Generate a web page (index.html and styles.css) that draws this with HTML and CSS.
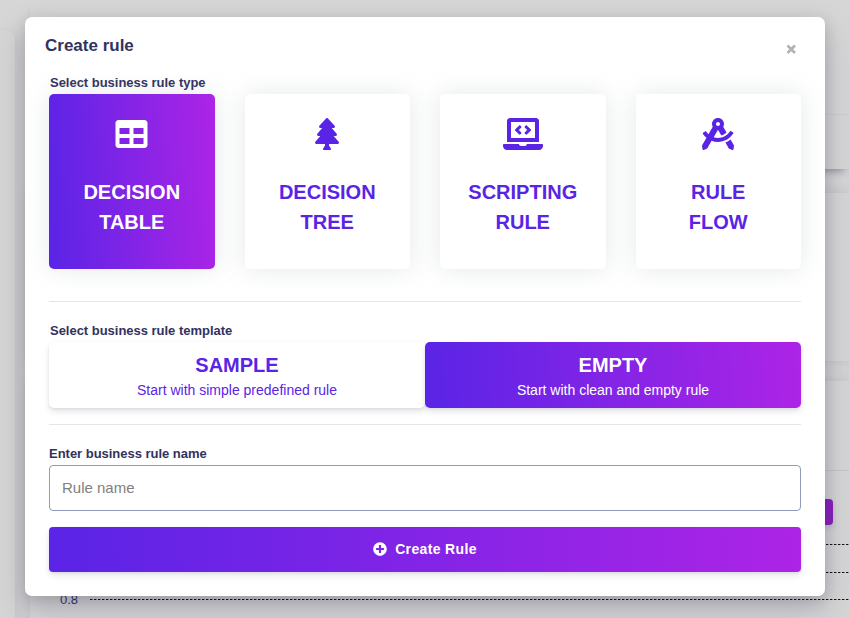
FILE: index.html
```html
<!DOCTYPE html>
<html lang="en">
<head>
<meta charset="utf-8">
<title>Create rule</title>
<link rel="stylesheet" href="styles.css">
</head>
<body>
<div class="page">
  <div class="sidebar"></div>
  <div class="content">
    <div class="panel panel-top"><div class="panel-head"></div></div>
    <div class="panel panel-mid"></div>
    <div class="panel panel-chart">
      <div class="chart-head"></div>
      <div class="chart-tools"><div class="tool-button"></div></div>
      <div class="tick"><span></span><i></i></div>
      <div class="tick"><span></span><i></i></div>
      <div class="tick"><span>0.8</span><i></i></div>
    </div>
  </div>
</div>
<div class="modal">
  <header class="modal-head">
    <h1>Create rule</h1>
    <button class="close" aria-label="Close"><svg viewBox="0 0 11 11"><path d="M1.500 1.500l7.500 7.500M9 1.500L1.500 9"/></svg></button>
  </header>
  <div class="label label-type">Select business rule type</div>
  <div class="types">
    <div class="type active">
      <svg class="icon icon-table" viewBox="0 0 512 512"><path d="M464 32H48C21.49 32 0 53.49 0 80v352c0 26.51 21.49 48 48 48h416c26.51 0 48-21.49 48-48V80c0-26.51-21.49-48-48-48zM224 416H64v-96h160v96zm0-160H64v-96h160v96zm224 160H288v-96h160v96zm0-160H288v-96h160v96z"/></svg>
      <div>DECISION<br>TABLE</div>
    </div>
    <div class="type">
      <svg class="icon" viewBox="0 0 384 512"><path d="M378.31 378.49L298.42 288h30.63c9.01 0 16.98-5 20.78-13.06 3.8-8.04 2.55-17.26-3.28-24.05L268.42 160h28.89c9.1 0 17.3-5.35 20.86-13.61 3.52-8.13 1.86-17.59-4.24-24.08L203.66 4.83c-6.03-6.45-17.28-6.45-23.32 0L70.06 122.31c-6.1 6.49-7.75 15.95-4.24 24.08C69.38 154.65 77.59 160 86.69 160h28.89l-78.14 90.91c-5.81 6.78-7.06 15.99-3.27 24.04C37.97 283 45.93 288 54.95 288h30.63L5.69 378.49c-6 6.79-7.36 16.09-3.56 24.26 3.75 8.05 12 13.25 21.01 13.25H160v24.45l-30.29 48.4c-5.32 10.64 2.42 23.16 14.31 23.16h95.96c11.89 0 19.63-12.52 14.31-23.16L224 440.45V416h136.86c9.01 0 17.26-5.2 21.01-13.25 3.8-8.17 2.44-17.47-3.56-24.26z"/></svg>
      <div>DECISION<br>TREE</div>
    </div>
    <div class="type">
      <svg class="icon" viewBox="0 0 640 512"><path d="M255.03 261.65c6.25 6.25 16.38 6.25 22.63 0l11.31-11.31c6.25-6.25 6.25-16.38 0-22.63L253.25 192l35.71-35.72c6.25-6.25 6.25-16.38 0-22.63l-11.31-11.31c-6.25-6.25-16.38-6.25-22.63 0l-58.34 58.34c-6.25 6.25-6.25 16.38 0 22.63l58.35 58.34zm96.01-11.3l11.31 11.31c6.25 6.25 16.38 6.25 22.63 0l58.34-58.34c6.25-6.25 6.25-16.38 0-22.63l-58.34-58.34c-6.25-6.25-16.38-6.25-22.63 0l-11.31 11.31c-6.25 6.25-6.25 16.38 0 22.63L386.75 192l-35.71 35.72c-6.25 6.25-6.25 16.38 0 22.63zM624 416H381.54c-.74 19.81-14.71 32-32.74 32H288c-18.69 0-33.02-17.47-32.77-32H16c-8.8 0-16 7.2-16 16v16c0 35.2 28.8 64 64 64h512c35.2 0 64-28.8 64-64v-16c0-8.8-7.2-16-16-16zM576 48c0-26.4-21.6-48-48-48H112C85.6 0 64 21.6 64 48v336h512V48zm-64 272H128V64h384v256z"/></svg>
      <div>SCRIPTING<br>RULE</div>
    </div>
    <div class="type">
      <svg class="icon" viewBox="0 0 512 512"><path d="M457.01 344.42c-25.05 20.33-52.63 37.18-82.54 49.05l54.38 94.19 53.95 23.04c9.81 4.19 20.89-2.21 22.17-12.8l7.02-58.25-54.98-95.23zm42.49-94.56c4.86-7.67 1.89-17.99-6.05-22.39l-28.07-15.57c-7.48-4.15-16.61-1.46-21.26 5.72C403.01 281.15 332.25 320 256 320c-23.93 0-47.23-4.25-69.41-11.53l67.36-116.68c.7.02 1.34.21 2.04.21s1.35-.19 2.04-.21l51.09 88.5c31.23-8.96 59.56-25.75 82.61-48.92l-51.79-89.71C347.39 128.03 352 112.63 352 96c0-53.02-42.98-96-96-96s-96 42.98-96 96c0 16.63 4.61 32.03 12.05 45.66l-68.3 118.31c-12.55-11.61-23.96-24.59-33.68-39-4.79-7.1-13.97-9.62-21.38-5.33l-27.75 16.07c-7.85 4.54-10.63 14.9-5.64 22.47 15.57 23.64 34.69 44.21 55.98 62.02L0 439.66l7.02 58.25c1.28 10.59 12.36 16.99 22.17 12.8l53.95-23.04 70.8-122.63C186.13 377.28 220.62 384 256 384c99.05 0 190.88-51.01 243.5-134.14zM256 64c17.67 0 32 14.33 32 32s-14.33 32-32 32-32-14.33-32-32 14.33-32 32-32z"/></svg>
      <div>RULE<br>FLOW</div>
    </div>
  </div>
  <hr class="rule-first">
  <div class="label indent">Select business rule template</div>
  <div class="templates">
    <div class="template"><strong>SAMPLE</strong><span>Start with simple predefined rule</span></div>
    <div class="template active"><strong>EMPTY</strong><span>Start with clean and empty rule</span></div>
  </div>
  <hr class="rule-second">
  <label class="label" for="name">Enter business rule name</label>
  <input id="name" class="field" type="text" placeholder="Rule name">
  <button class="submit"><svg viewBox="0 0 512 512"><path d="M256 8C119 8 8 119 8 256s111 248 248 248 248-111 248-248S393 8 256 8zm144 276c0 6.600-5.400 12-12 12h-92v92c0 6.600-5.400 12-12 12h-56c-6.600 0-12-5.400-12-12v-92h-92c-6.600 0-12-5.400-12-12v-56c0-6.600 5.400-12 12-12h92v-92c0-6.600 5.400-12 12-12h56c6.600 0 12 5.400 12 12v92h92c6.600 0 12 5.400 12 12v56z"/></svg>Create Rule</button>
</div>
</body>
</html>
```
FILE: styles.css
```css
* { box-sizing: border-box; }

body {
  margin: 0;
  width: 849px;
  height: 618px;
  overflow: hidden;
  position: relative;
  background: #d6d6d6;
  font-family: "Liberation Sans", Arial, sans-serif;
  color: #32325d;
}

.page { display: flex; gap: 15px; height: 618px; }

.sidebar {
  width: 15px;
  margin-top: 31px;
  background: #d6d6d6;
  border-radius: 0 8px 0 0;
  box-shadow: 0 6px 14px rgba(60, 65, 95, .16);
}

.content { flex: 1; display: flex; flex-direction: column; }

.panel { background: #d6d6d6; box-shadow: 0 0 12px rgba(60, 65, 95, .14); flex: none; }
.panel-top { height: 169px; margin-bottom: 24px; box-shadow: 0 7px 8px -5px rgba(40, 40, 70, .42); }
.panel-head { height: 115px; border-bottom: 1px solid #cecece; }
.panel-mid { height: 168px; margin-bottom: 20px; }
.panel-chart { height: 260px; }
.chart-head { height: 90px; border-bottom: 1px solid #c6c6c6; }
.chart-tools { height: 60px; padding: 28px 16px 0 0; display: flex; justify-content: flex-end; }
.tool-button {
  width: 60px;
  height: 26px;
  border-radius: 4px;
  background: #8b20bd;
  box-shadow: 0 3px 5px rgba(50, 50, 93, .15);
}
.tick { height: 27.500px; display: flex; align-items: center; font-size: 13px; line-height: 17px; color: #32325d; }
.tick span { width: 60px; padding-left: 30px; }
.tick i { flex: 1; height: 1px; background: repeating-linear-gradient(90deg, #111 0 2px, #888 2px 3px, transparent 3px 4px); }

.modal {
  position: absolute;
  top: 17px;
  left: 25px;
  width: 800px;
  height: 579px;
  padding: 0 24px;
  display: flex;
  flex-direction: column;
  background: #fff;
  border-radius: 7px;
  box-shadow: 0 15px 35px rgba(50, 50, 93, .2), 0 5px 15px rgba(0, 0, 0, .17);
}

.modal-head {
  height: 56px;
  margin: 0 -4px;
  padding-top: 1px;
  display: flex;
  justify-content: space-between;
  align-items: center;
}
h1 { margin: 0; font-size: 17px; line-height: 24px; font-weight: 600; }
.close { width: 11px; height: 11px; margin: 7px 8px 0 0; padding: 0; border: 0; background: none; }
.close svg { display: block; width: 11px; height: 11px; }
.close path { stroke: #b2b2b2; stroke-width: 2.600; fill: none; }

.label { font-size: 13px; line-height: 20px; font-weight: 600; height: 20px; letter-spacing: -.02px; }
.indent { padding-left: 1px; }
.label-type { height: 21px; padding-left: 1px; }

.types { display: grid; grid-template-columns: repeat(4, 1fr); gap: 30px; }
.type {
  height: 175px;
  padding-top: 24px;
  display: flex;
  flex-direction: column;
  align-items: center;
  gap: 27px;
  color: #5a24e6;
  border-radius: 5px;
  box-shadow: 0 0 24px rgba(136, 152, 160, .22);
  font-size: 20px;
  line-height: 30px;
  font-weight: 600;
  text-align: center;
}
.icon { height: 32px; fill: currentColor; }
.icon-table { width: 33px; }
.active { color: #fff; background: linear-gradient(87deg, #5a24e6, #ad24e6); }

hr { width: 100%; margin: 0; border: 0; border-top: 1px solid #e5e5e6; }
.rule-first { margin: 32px 0 19px; }
.rule-second { margin: 16px 0 19px; }

.templates { display: grid; grid-template-columns: 1fr 1fr; margin-top: 1px; }
.template {
  height: 66px;
  padding-top: 8px;
  display: flex;
  flex-direction: column;
  align-items: center;
  border-radius: 5px;
  box-shadow: 0 4px 6px rgba(50, 50, 93, .11), 0 1px 3px rgba(0, 0, 0, .08);
}
.template:not(.active) { color: #5a24e6; }
.template strong { font-size: 20px; line-height: 30px; }
.template span { font-size: 14px; line-height: 20px; }

.field {
  height: 46px;
  margin: 1px 0 16px;
  padding: 0 12px 2px;
  border: 1px solid #8f9bbb;
  border-radius: 4px;
  background: #fff;
  font: 15px "Liberation Sans", Arial, sans-serif;
}
.field::placeholder { color: #808080; }

.submit {
  height: 45px;
  padding: 0 0 2px;
  display: flex;
  justify-content: center;
  align-items: center;
  gap: 8px;
  border: 0;
  border-radius: 4px;
  background: linear-gradient(87deg, #5a24e6, #ad24e6);
  box-shadow: 0 4px 6px rgba(50, 50, 93, .11), 0 1px 3px rgba(0, 0, 0, .08);
  color: #fff;
  font: bold 14px "Liberation Sans", Arial, sans-serif;
  letter-spacing: .35px;
}
.submit svg { width: 14px; height: 14px; fill: currentColor; }
```
